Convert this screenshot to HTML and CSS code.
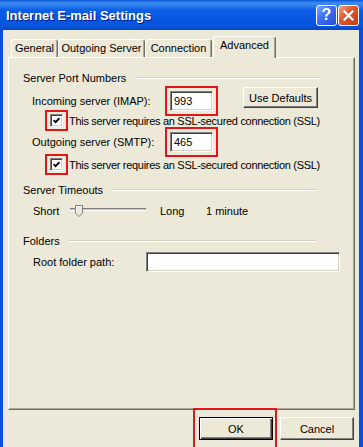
FILE: index.html
```html
<!DOCTYPE html>
<html lang="en">
<head>
    <meta charset="UTF-8">
    <meta name="viewport" content="width=device-width, initial-scale=1.0">
    <title>Internet E-mail Settings</title>
    <link rel="stylesheet" href="styles.css">
</head>
<body>
    <div class="window">
        <!-- Title bar -->
        <div class="titlebar">
            <span class="title">Internet E-mail Settings</span>
            <div class="caption-buttons">
                <span class="cap-btn help">?</span>
                <span class="cap-btn close">
                    <svg width="11" height="11" viewBox="0 0 11 11">
                        <path d="M1.5 1.5 L9.5 9.5 M9.5 1.5 L1.5 9.5" stroke="#fff" stroke-width="2.2" stroke-linecap="square"/>
                    </svg>
                </span>
            </div>
        </div>

        <div class="client">
            <!-- Tabs -->
            <div class="tabs">
                <div class="tab tab-general">General</div>
                <div class="tab tab-outgoing">Outgoing Server</div>
                <div class="tab tab-connection">Connection</div>
                <div class="tab active">Advanced</div>
            </div>

            <div class="panel">
                <!-- Server Port Numbers -->
                <div class="group-head">
                    <span>Server Port Numbers</span>
                    <i class="etch"></i>
                </div>
                <div class="row row-port row-imap">
                    <span class="field-label">Incoming server (IMAP):</span>
                    <span class="mark mark-input"><input class="textbox port" type="text" value="993" readonly></span>
                    <button class="btn defaults">Use Defaults</button>
                </div>
                <div class="row row-check">
                    <span class="mark mark-check">
                        <span class="checkbox">
                            <svg width="7" height="7" viewBox="0 0 7 7">
                                <path d="M0.6 3.2 L2.6 5.2 L6.4 1.2" stroke="#000" stroke-width="1.8" fill="none"/>
                            </svg>
                        </span>
                    </span>
                    <span class="check-text">This server requires an SSL-secured connection (SSL)</span>
                </div>
                <div class="row row-port row-smtp">
                    <span class="field-label">Outgoing server (SMTP):</span>
                    <span class="mark mark-input"><input class="textbox port" type="text" value="465" readonly></span>
                </div>
                <div class="row row-check row-check2">
                    <span class="mark mark-check">
                        <span class="checkbox">
                            <svg width="7" height="7" viewBox="0 0 7 7">
                                <path d="M0.6 3.2 L2.6 5.2 L6.4 1.2" stroke="#000" stroke-width="1.8" fill="none"/>
                            </svg>
                        </span>
                    </span>
                    <span class="check-text">This server requires an SSL-secured connection (SSL)</span>
                </div>

                <!-- Server Timeouts -->
                <div class="group-head short head-timeouts">
                    <span>Server Timeouts</span>
                    <i class="etch"></i>
                </div>
                <div class="row row-slider">
                    <span class="slider-label">Short</span>
                    <div class="slider">
                        <div class="track"></div>
                        <svg class="thumb" width="9" height="12" viewBox="0 0 9 12">
                            <path d="M0.5 0.5 H7.5 V8 L4 11.5 L0.5 8 Z" fill="#ECE9D8" stroke="#808080"/>
                            <path d="M1.5 8 V1.5 H6.5" stroke="#fff" fill="none"/>
                        </svg>
                    </div>
                    <span class="slider-long">Long</span>
                    <span>1 minute</span>
                </div>

                <!-- Folders -->
                <div class="group-head short head-folders">
                    <span>Folders</span>
                    <i class="etch"></i>
                </div>
                <div class="row row-root">
                    <span class="root-label">Root folder path:</span>
                    <input class="textbox root" type="text" value="" readonly>
                </div>
            </div>

            <!-- Dialog buttons -->
            <div class="footer">
                <span class="mark mark-ok"><button class="btn default">OK</button></span>
                <button class="btn">Cancel</button>
            </div>
        </div>
    </div>
</body>
</html>
```

FILE: styles.css
```css
* {
    box-sizing: border-box;
}
body {
    margin: 0;
    background-color: #ECE9D8;
    font-family: "Liberation Sans", Arial, sans-serif;
    font-size: 11px;
    color: #000;
    overflow: hidden;
}
.window {
    width: 363px;
    height: 447px;
    display: flex;
    flex-direction: column;
}

/* title bar */
.titlebar {
    height: 30px;
    flex: none;
    display: flex;
    align-items: center;
    padding: 0 4px 0 6px;
    background: linear-gradient(to bottom, #0a54d8 0px, #3c8ef3 3px, #2c7dee 6px, #0b5ee6 10px, #0756e0 20px, #0655db 26px, #0347c5 30px);
}
.title {
    flex: 1;
    color: #fff;
    font-weight: bold;
    font-size: 13px;
    text-shadow: 1px 1px #0a1883;
}
.caption-buttons {
    display: flex;
    gap: 1px;
}
.cap-btn {
    width: 21px;
    height: 21px;
    border: 1px solid #fff;
    border-radius: 3px;
    display: flex;
    align-items: center;
    justify-content: center;
    color: #fff;
}
.help {
    background: linear-gradient(135deg, #79a8f8 0%, #3b6ff0 45%, #1f4fd6 100%);
    font-weight: bold;
    font-size: 16px;
}
.close {
    background: linear-gradient(135deg, #f3a68c 0%, #e2582f 40%, #c43a13 100%);
}

/* client area */
.client {
    flex: 1;
    display: flex;
    flex-direction: column;
    border-left: 3px solid #0a4fd8;
    border-right: 4px solid #0a4fd8;
    padding: 0 4px 0 5px;
}

/* tabs */
.tabs {
    height: 27px;
    flex: none;
    display: flex;
    align-items: flex-end;
    padding-left: 3px;
}
.tab {
    height: 18px;
    padding-top: 1px;
    line-height: 14px;
    text-align: center;
    white-space: nowrap;
    border: 1px solid;
    border-color: #fff #716f64 transparent #fff;
    border-bottom: none;
    border-radius: 3px 3px 0 0;
    box-shadow: inset -1px 0 #aca899;
}
.tab-general {
    width: 47px;
}
.tab-outgoing {
    width: 87px;
}
.tab-connection {
    width: 67px;
}
.tab.active {
    width: 63px;
    height: 22px;
    margin-left: 1px;
    margin-bottom: -1px;
    position: relative;
    z-index: 1;
    background-color: #ECE9D8;
}

/* tab panel */
.panel {
    height: 353px;
    flex: none;
    border: 1px solid;
    border-color: #fff #716f64 #716f64 #fff;
    box-shadow: inset -1px -1px #aca899;
    padding: 13px 0 0 14px;
}
.group-head {
    display: flex;
    align-items: center;
    height: 14px;
    width: 297px;
}
.group-head.short {
    width: 293px;
}
.etch {
    flex: 1;
    height: 2px;
    margin-left: 9px;
    border-top: 1px solid #d0d0bf;
    border-bottom: 1px solid #fff;
}
.head-timeouts {
    margin-top: 8px;
}
.head-folders {
    margin-top: 13px;
}

.row {
    display: flex;
    align-items: center;
    height: 20px;
    width: 297px;
}
.row-port {
    padding-left: 9px;
}
.row-imap {
    margin-top: 6px;
}
.row-smtp {
    margin-top: 1px;
}
.field-label {
    width: 133px;
    flex: none;
}

/* red highlight frames */
.mark {
    display: inline-flex;
    flex: none;
    border: 2px solid #e0161b;
}
.mark-input {
    padding: 3px;
    margin: -5px 0;
}
.mark-check {
    padding: 2px 3px;
    margin-top: -1px;
}
.mark-ok {
    padding: 7px 2px 10px 4px;
    margin: -9px -4px -12px -6px;
}

.textbox {
    height: 20px;
    padding: 0 3px;
    font: inherit;
    color: #000;
    background-color: #fff;
    border: 1px solid;
    border-color: #808080 #fff #fff #808080;
    box-shadow: inset 1px 1px #404040, inset -1px -1px #d4d0c8;
    outline: none;
}
.port {
    width: 43px;
}
.root {
    width: 194px;
    flex: none;
}

.btn {
    font: inherit;
    color: #000;
    background-color: #ECE9D8;
    border: 1px solid;
    border-color: #fff #404040 #404040 #fff;
    box-shadow: inset -1px -1px #808080;
    padding: 0;
    height: 23px;
    width: 74px;
}
.btn.default {
    border-color: #000;
    box-shadow: inset 1px 1px #fff, inset -1px -1px #404040, inset -2px -2px #808080;
}
.defaults {
    width: 75px;
    height: 21px;
    align-self: flex-start;
    margin: -4px 2px 0 auto;
}

/* checkboxes */
.row-check {
    padding-left: 22px;
}
.row-check2 {
    margin-top: 3px;
}
.checkbox {
    width: 13px;
    height: 13px;
    display: flex;
    align-items: center;
    justify-content: center;
    background-color: #fff;
    border: 1px solid;
    border-color: #808080 #fff #fff #808080;
    box-shadow: inset 1px 1px #404040, inset -1px -1px #d4d0c8;
}
.check-text {
    flex: 1;
    margin-left: 1px;
    letter-spacing: -0.3px;
    white-space: nowrap;
    overflow: hidden;
}

/* timeout slider */
.row-slider {
    margin-top: 4px;
    padding-left: 10px;
}
.slider-label {
    width: 37px;
}
.slider {
    position: relative;
    width: 76px;
    height: 20px;
}
.track {
    margin-top: 7px;
    height: 3px;
    border-top: 1px solid #808080;
    border-bottom: 1px solid #fff;
    background-color: #c5c2b2;
}
.thumb {
    position: absolute;
    left: 5px;
    top: 4px;
}
.slider-long {
    width: 46px;
    margin-left: 14px;
}

/* folders */
.row-root {
    margin-top: 4px;
    padding-left: 10px;
}
.root-label {
    width: 113px;
    flex: none;
}

/* dialog buttons */
.footer {
    display: flex;
    justify-content: flex-end;
    gap: 7px;
    margin-top: 7px;
    padding-right: 1px;
}
```
